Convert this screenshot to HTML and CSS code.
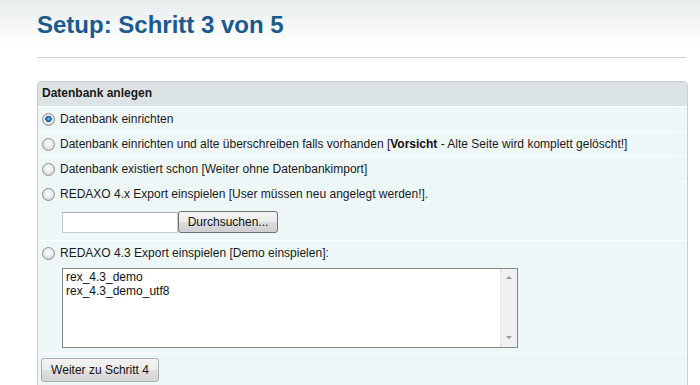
FILE: index.html
```html
<!DOCTYPE html>
<html lang="de">
<head>
<meta charset="utf-8">
<title>Setup: Schritt 3 von 5</title>
<link rel="stylesheet" href="styles.css">
</head>
<body>
<div class="page">
  <h1 class="title">Setup: Schritt 3 von 5</h1>
  <hr class="rule">
  <form class="panel">
    <div class="panel-head">Datenbank anlegen</div>
    <div class="row">
      <label class="opt"><input type="radio" name="db" class="radio" checked><span>Datenbank einrichten</span></label>
    </div>
    <div class="row">
      <label class="opt"><input type="radio" name="db" class="radio"><span>Datenbank einrichten und alte überschreiben falls vorhanden [<b>Vorsicht</b> - Alte Seite wird komplett gelöscht!]</span></label>
    </div>
    <div class="row">
      <label class="opt"><input type="radio" name="db" class="radio"><span>Datenbank existiert schon [Weiter ohne Datenbankimport]</span></label>
    </div>
    <div class="row row-tall">
      <label class="opt"><input type="radio" name="db" class="radio"><span>REDAXO 4.x Export einspielen [User müssen neu angelegt werden!].</span></label>
      <div class="file">
        <input type="text" class="file-text">
        <button type="button" class="file-btn">Durchsuchen...</button>
      </div>
    </div>
    <div class="row row-list">
      <label class="opt"><input type="radio" name="db" class="radio"><span>REDAXO 4.3 Export einspielen [Demo einspielen]:</span></label>
      <div class="listbox">
        <div class="list-items">
          <div class="list-item">rex_4.3_demo</div>
          <div class="list-item">rex_4.3_demo_utf8</div>
        </div>
        <div class="scrollbar">
          <span class="arrow arrow-up"></span>
          <span class="arrow arrow-down"></span>
        </div>
      </div>
    </div>
    <div class="row row-foot">
      <button type="button" class="btn">Weiter zu Schritt 4</button>
    </div>
  </form>
</div>
</body>
</html>
```

FILE: styles.css
```css
html, body {
  margin: 0;
  padding: 0;
}

body {
  background: linear-gradient(#e8ecec 0, #ffffff 45px) no-repeat;
  background-color: #fff;
  font-family: "Liberation Sans", Arial, sans-serif;
  font-size: 12px;
  color: #111;
  height: 385px;
  overflow: hidden;
}

.page {
  padding: 11px 12px 0 37px;
}

.title {
  margin: 0;
  font-size: 24px;
  line-height: 28px;
  font-weight: bold;
  color: #1b5a8d;
}

.rule {
  margin: 18px 2px 0 0;
  border: 0;
  border-top: 1px solid #cfcfcf;
  height: 0;
}

.panel {
  margin: 23px 0 0 0;
  border: 1px solid #c9cdcd;
  border-radius: 4px 4px 0 0;
  background: #eef7f8;
  overflow: hidden;
}

.panel-head {
  background: #dce3e4;
  height: 24px;
  line-height: 23px;
  padding-left: 4px;
  font-weight: bold;
  color: #1a1a1a;
}

.row {
  border-top: 1px solid #fff;
  min-height: 24px;
  padding-left: 4px;
}

.opt {
  display: flex;
  align-items: center;
  height: 24px;
  gap: 5px;
  color: #1a1a1a;
}

.opt b {
  color: #111;
}

.radio {
  -webkit-appearance: none;
  appearance: none;
  margin: 0;
  width: 13px;
  height: 13px;
  border-radius: 50%;
  border: 1px solid #8f8f8f;
  background: radial-gradient(circle at 50% 40%, #ffffff 0, #eaeaea 45%, #c8c8c8 100%);
  box-sizing: border-box;
  flex: none;
}

.radio:checked {
  background:
    radial-gradient(circle at 50% 45%, #9fd3ff 0, #2b7fd0 1.6px, #0d4f93 3px, transparent 3.4px),
    radial-gradient(circle at 50% 40%, #ffffff 0, #eaeaea 45%, #c8c8c8 100%);
}

.row-tall {
  padding-bottom: 7px;
}

.file {
  display: flex;
  align-items: center;
  margin: 5px 0 0 20px;
}

.file-text {
  width: 116px;
  height: 21px;
  box-sizing: border-box;
  border: 1px solid #c8cbd0;
  border-top-color: #abadb3;
  background: #fff;
  margin: 0;
  padding: 0;
}

.file-btn {
  margin: 0;
  width: 100px;
  height: 22px;
  box-sizing: border-box;
  border: 1px solid #707070;
  border-radius: 3px;
  background: linear-gradient(#f4f4f4 0, #ebebeb 50%, #dddddd 51%, #cfcfcf 100%);
  font-family: "Liberation Sans", Arial, sans-serif;
  font-size: 12px;
  color: #111;
  padding: 0;
}

.row-list {
  padding-bottom: 5px;
}

.listbox {
  display: flex;
  margin: 3px 0 0 20px;
  width: 456px;
  height: 80px;
  box-sizing: border-box;
  border: 1px solid #82878d;
  background: #fff;
}

.list-items {
  flex: 1;
  padding: 1px 0 0 3px;
}

.list-item {
  line-height: 14px;
  color: #111;
}

.scrollbar {
  width: 16px;
  background: #f0f0f0;
  border-left: 1px solid #e6e6e6;
  display: flex;
  flex-direction: column;
  justify-content: space-between;
  align-items: center;
  padding: 7px 0 8px;
}

.arrow {
  width: 0;
  height: 0;
  border-left: 3px solid transparent;
  border-right: 3px solid transparent;
}

.arrow-up {
  border-bottom: 3px solid #9a9a9a;
}

.arrow-down {
  border-top: 3px solid #9a9a9a;
}

.row-foot {
  padding: 4px 0 4px 3px;
}

.btn {
  margin: 0;
  width: 118px;
  height: 24px;
  box-sizing: border-box;
  border: 1px solid #acacac;
  border-radius: 3px;
  background: linear-gradient(#f2f2f2 0, #ebebeb 50%, #dfdfdf 51%, #d5d5d5 100%);
  font-family: "Liberation Sans", Arial, sans-serif;
  font-size: 12px;
  color: #111;
  padding: 0;
}
```
